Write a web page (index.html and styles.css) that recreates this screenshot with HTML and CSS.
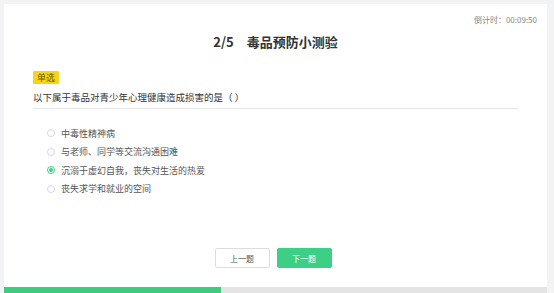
FILE: index.html
```html
<!DOCTYPE html>
<html lang="zh-CN">
<head>
    <meta charset="UTF-8">
    <meta name="viewport" content="width=device-width, initial-scale=1.0">
    <title>毒品预防小测验</title>
    <link rel="stylesheet" href="styles.css">
</head>
<body>
    <div class="card">
        <div class="timer">倒计时：00:09:50</div>
        <h1 class="title"><span class="step">2/5</span>毒品预防小测验</h1>

        <div class="question">
            <span class="tag">单选</span>
            <div class="question-text">以下属于毒品对青少年心理健康造成损害的是（ ）</div>
        </div>

        <ul class="options">
            <li class="option"><span class="radio"></span>中毒性精神病</li>
            <li class="option"><span class="radio"></span>与老师、同学等交流沟通困难</li>
            <li class="option checked"><span class="radio"></span>沉溺于虚幻自我，丧失对生活的热爱</li>
            <li class="option"><span class="radio"></span>丧失求学和就业的空间</li>
        </ul>

        <div class="actions">
            <button class="btn btn-prev">上一题</button>
            <button class="btn btn-next">下一题</button>
        </div>

        <div class="progress">
            <div class="progress-bar" style="width: 40%"></div>
        </div>
    </div>
</body>
</html>
```

FILE: styles.css
```css
body {
    margin: 0;
    padding: 4px 7px 0 4px;
    background-color: #f2f3f5;
    font-family: "Noto Sans CJK SC", "Noto Sans", sans-serif;
    color: #333;
}

.card {
    background: white;
    height: 289px;
    display: flex;
    flex-direction: column;
}

.timer {
    margin-top: 10px;
    padding-right: 10px;
    text-align: right;
    font-size: 8px;
    line-height: 12px;
    color: #888;
}

.title {
    margin: 7px 0 0;
    text-align: center;
    font-size: 13px;
    line-height: 18px;
    font-weight: bold;
    color: #333;
}

.step {
    margin-right: 13px;
}

.question {
    margin: 20px 29px 0;
    padding-bottom: 4px;
    border-bottom: 1px solid #e6e6e6;
}

.tag {
    display: block;
    width: fit-content;
    padding: 0 4px;
    background: #f7d417;
    color: #6b5a00;
    font-size: 9px;
    line-height: 13px;
    border-radius: 1px;
}

.question-text {
    margin-top: 6px;
    font-size: 9.5px;
    line-height: 14px;
    color: #333;
}

.options {
    list-style: none;
    margin: 15px 0 0;
    padding: 0 0 0 43px;
}

.option {
    display: flex;
    align-items: center;
    height: 18.5px;
    font-size: 9px;
    color: #555;
}

.radio {
    box-sizing: border-box;
    width: 8px;
    height: 8px;
    margin-right: 6px;
    border: 1px solid #d9d9d9;
    border-radius: 50%;
    display: flex;
    align-items: center;
    justify-content: center;
}

.option.checked .radio {
    border-color: #3ccf85;
}

.option.checked .radio::after {
    content: "";
    width: 4px;
    height: 4px;
    border-radius: 50%;
    background: #3ccf85;
}

.actions {
    display: flex;
    justify-content: center;
    gap: 7px;
    margin-top: 50px;
    padding-right: 5px;
}

.btn {
    width: 55px;
    height: 20px;
    padding: 0;
    font-family: inherit;
    font-size: 8px;
    border-radius: 2px;
    cursor: pointer;
}

.btn-prev {
    background: white;
    border: 1px solid #dcdcdc;
    color: #555;
}

.btn-next {
    background: #3ccf85;
    border: 1px solid #3ccf85;
    color: white;
}

.progress {
    margin-top: auto;
    height: 6px;
    background: #e4e4e4;
}

.progress-bar {
    height: 100%;
    background: #3ccb7f;
}
```
